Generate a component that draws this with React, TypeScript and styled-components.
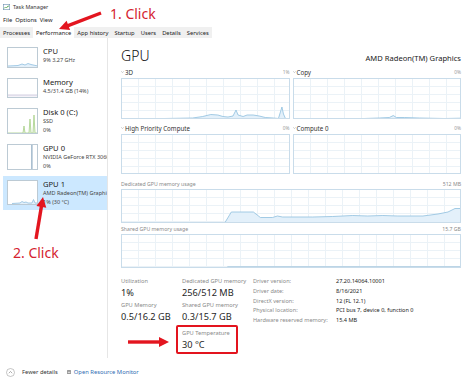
import React from 'react';
import styled, { createGlobalStyle } from 'styled-components';

const GlobalStyle = createGlobalStyle`
  html, body {
    margin: 0;
    padding: 0;
    background: #fff;
  }
  body {
    font-family: "Noto Sans", "DejaVu Sans", sans-serif;
    color: #1b1b1b;
  }
`;

const Window = styled.div`
  position: relative;
  width: 474px;
  height: 384px;
  overflow: hidden;
  display: flex;
  flex-direction: column;
  background: #fff;
`;

const TitleBar = styled.div`
  height: 14px;
  display: flex;
  align-items: center;
  gap: 3px;
  padding-left: 3px;
  font-size: 5.4px;
  color: #333;
`;

const MenuBar = styled.div`
  height: 11px;
  display: flex;
  align-items: center;
  gap: 3px;
  padding-left: 3px;
  font-size: 5.8px;
  color: #222;
`;

const TabStrip = styled.div`
  margin-top: 2px;
  height: 11px;
  display: flex;
  align-self: flex-start;
  background: #f0f0f0;
`;

const Tab = styled.div<{ $active?: boolean }>`
  display: flex;
  align-items: center;
  padding: 0 3px;
  font-size: 5.8px;
  color: #222;
  background: ${({ $active }) => ($active ? '#fff' : 'transparent')};
`;

const Body = styled.div`
  flex: 1;
  display: flex;
  min-height: 0;
`;

const Sidebar = styled.div`
  width: 108px;
  box-sizing: border-box;
  flex: none;
  padding: 5px 0 0 3px;
  margin-bottom: 4px;
  border-right: 1px solid #e6e6e6;
  display: flex;
  flex-direction: column;
  gap: 2px;
`;

const Item = styled.div<{ $selected?: boolean }>`
  display: flex;
  gap: 5px;
  padding: 4px;
  overflow: hidden;
  background: ${({ $selected }) => ($selected ? '#cce8ff' : 'transparent')};
`;

const Thumb = styled.div<{ $h: number }>`
  flex: none;
  width: 31px;
  height: ${({ $h }) => $h}px;
  box-sizing: border-box;
  border: 1px solid #bccad4;
  background: #fff;

  svg {
    display: block;
    width: 100%;
    height: 100%;
  }
`;

const ItemText = styled.div`
  display: flex;
  flex-direction: column;
  white-space: nowrap;
  min-width: 0;
`;

const ItemTitle = styled.div`
  font-size: 7.6px;
  line-height: 9px;
  color: #1a1a1a;
`;

const ItemSub = styled.div`
  font-size: 5.5px;
  line-height: 8.5px;
  color: #444;
`;

const Main = styled.div`
  flex: 1;
  min-width: 0;
  padding: 8px 13px 0 13px;
  display: flex;
  flex-direction: column;
`;

const Header = styled.div`
  height: 20px;
  display: flex;
  align-items: flex-end;
  justify-content: space-between;
`;

const Title = styled.div`
  font-size: 14px;
  line-height: 20px;
  font-weight: 300;
  color: #111;
`;

const Adapter = styled.div`
  font-size: 7.6px;
  line-height: 10px;
  padding-bottom: 3px;
  color: #222;
`;

const ChartGrid = styled.div`
  display: grid;
  grid-template-columns: 1fr 1fr;
  column-gap: 3px;
  row-gap: 3px;
`;

const ChartHead = styled.div<{ $h: number; $muted?: boolean }>`
  height: ${({ $h }) => $h}px;
  display: flex;
  align-items: center;
  justify-content: space-between;
  font-size: ${({ $muted }) => ($muted ? '5.2px' : '6.2px')};
  color: ${({ $muted }) => ($muted ? '#8a8a8a' : '#333')};
  white-space: nowrap;
`;

const HeadLabel = styled.span`
  display: flex;
  align-items: center;
  gap: 1px;
`;

const HeadValue = styled.span`
  font-size: 4.8px;
  color: #999;
`;

const ChartBox = styled.div<{ $h: number }>`
  height: ${({ $h }) => $h}px;
  box-sizing: border-box;
  border: 1px solid #c9dcea;
  background-color: #fff;
  background-image: linear-gradient(to right, #ebf2f7 1px, transparent 1px),
    linear-gradient(to bottom, #ebf2f7 1px, transparent 1px);
  background-size: 17px 8px;
  background-position: -1px -1px;

  svg {
    display: block;
    width: 100%;
    height: 100%;
  }
`;

const MemoryChart = styled.div`
  margin-top: 4px;
`;

const Stats = styled.div`
  margin-top: 9px;
  display: flex;
`;

const StatGrid = styled.div`
  display: grid;
  grid-template-columns: 61px 71px;
  row-gap: 1px;
  align-content: start;
`;

const Stat = styled.div<{ $col?: number }>`
  grid-column: ${({ $col }) => $col ?? 'auto'};
  display: flex;
  flex-direction: column;
  white-space: nowrap;
`;

const TempStat = styled(Stat)`
  justify-self: start;
  width: 50px;
  margin-left: -6px;
  padding: 2px 4px 0;
  border: 2px solid #e3141e;
  border-radius: 2px;
`;

const StatLabel = styled.div`
  font-size: 5.7px;
  line-height: 9px;
  color: #8a8a8a;
`;

const StatValue = styled.div`
  font-size: 9.2px;
  line-height: 14px;
  color: #1f1f1f;
`;

const DriverInfo = styled.div`
  display: grid;
  grid-template-columns: 83px auto;
  font-size: 5.55px;
  line-height: 9.8px;
  white-space: nowrap;
  align-content: start;
`;

const DriverKey = styled.div`
  color: #8a8a8a;
`;

const DriverVal = styled.div`
  color: #222;
`;

const Footer = styled.div`
  height: 20px;
  padding: 0 0 2px 6px;
  display: flex;
  align-items: center;
  gap: 9px;
  font-size: 5.8px;
  color: #333;
`;

const FooterLink = styled.span<{ $link?: boolean; $gap: number }>`
  display: flex;
  align-items: center;
  gap: ${({ $gap }) => $gap}px;
  color: ${({ $link }) => ($link ? '#2f6db3' : '#333')};
`;

const Annotations = styled.svg`
  position: absolute;
  left: 0;
  top: 0;
  width: 474px;
  height: 384px;
  pointer-events: none;
`;

const Callout = styled.div<{ $x: number; $y: number }>`
  position: absolute;
  left: ${({ $x }) => $x}px;
  top: ${({ $y }) => $y}px;
  font-size: 14px;
  line-height: 16px;
  color: #d5232f;
  white-space: nowrap;
`;

const Chevron = () => (
  <svg width="3" height="2" viewBox="0 0 3 2">
    <path d="M0.2 0.3 L1.5 1.6 L2.8 0.3" fill="none" stroke="#999" strokeWidth="0.5" />
  </svg>
);

type LineProps = { w: number; h: number; pts: [number, number][]; stroke?: string; fill?: string };

const Line = ({ w, h, pts, stroke = '#8fbfdf', fill = '#e3f0fa' }: LineProps) => {
  const d = pts.map(([x, y]) => `${x},${y}`).join(' ');
  const area = `${pts[0][0]},${h} ${d} ${pts[pts.length - 1][0]},${h}`;
  return (
    <svg viewBox={`0 0 ${w} ${h}`} preserveAspectRatio="none">
      <polygon points={area} fill={fill} />
      <polyline points={d} fill="none" stroke={stroke} strokeWidth="0.8" />
    </svg>
  );
};

const Arrow = ({ tail, tip }: { tail: [number, number]; tip: [number, number] }) => {
  const dx = tip[0] - tail[0];
  const dy = tip[1] - tail[1];
  const len = Math.hypot(dx, dy);
  const ux = dx / len;
  const uy = dy / len;
  const bx = tip[0] - ux * 10;
  const by = tip[1] - uy * 10;
  const nx = -uy * 5;
  const ny = ux * 5;
  return (
    <g fill="#e3151f" stroke="#e3151f">
      <line x1={tail[0]} y1={tail[1]} x2={bx + ux} y2={by + uy} strokeWidth="3.4" />
      <polygon points={`${tip[0]},${tip[1]} ${bx + nx},${by + ny} ${bx - nx},${by - ny}`} strokeWidth="0" />
    </g>
  );
};

const tabs = ['Processes', 'Performance', 'App history', 'Startup', 'Users', 'Details', 'Services'];

const chart3d: [number, number][] = [
  [42, 39.5], [70, 39], [80, 37.5], [88, 35.5], [95, 36], [100, 37.5], [105, 38], [110, 37],
  [113, 31], [115, 36], [120, 37.5], [124, 36], [130, 36], [136, 37], [142, 38.5], [150, 39],
  [155, 39.5], [157, 33], [158.5, 28], [160, 35], [162, 39.5], [165, 39.5],
];

const chartCopy: [number, number][] = [
  [70, 39.5], [85, 39], [95, 38.5], [99, 36.5], [102, 38.5], [110, 38.5], [125, 39], [150, 39.5], [166, 39.2],
];

const chartDedicated: [number, number][] = [
  [103, 32], [109, 22], [131, 22], [138, 27.5], [150, 27.5], [155, 26], [160, 27], [190, 27],
  [210, 26.5], [230, 25.5], [245, 26], [260, 25.5], [275, 26], [300, 26], [315, 24], [325, 22],
  [332, 18.5], [337, 18.5],
];

export default function App() {
  return (
    <Window>
      <GlobalStyle />
      <TitleBar>
        <svg width="7" height="6" viewBox="0 0 7 6">
          <rect x="0.3" y="0.3" width="6.4" height="5.4" fill="#fff" stroke="#6b8fb0" strokeWidth="0.6" />
          <polyline points="1,4.5 2.5,3 3.5,4 5,1.8 6,2.6" fill="none" stroke="#3c9a3c" strokeWidth="0.7" />
        </svg>
        <span>Task Manager</span>
      </TitleBar>
      <MenuBar>
        <span>File</span>
        <span>Options</span>
        <span>View</span>
      </MenuBar>
      <TabStrip>
        {tabs.map((t) => (
          <Tab key={t} $active={t === 'Performance'}>
            {t}
          </Tab>
        ))}
      </TabStrip>
      <Body>
        <Sidebar>
          <Item>
            <Thumb $h={21}>
              <Line w={29} h={19} pts={[[0, 18], [10, 17.5], [14, 16], [17, 17], [20, 15.5], [23, 16.5], [29, 17.8]]} />
            </Thumb>
            <ItemText>
              <ItemTitle>CPU</ItemTitle>
              <ItemSub>9% 3.27 GHz</ItemSub>
            </ItemText>
          </Item>
          <Item>
            <Thumb $h={20}>
              <Line w={29} h={18} pts={[[0, 16], [29, 16]]} stroke="#c7c2d8" fill="#f4f2f8" />
            </Thumb>
            <ItemText>
              <ItemTitle>Memory</ItemTitle>
              <ItemSub>4.5/31.4 GB (14%)</ItemSub>
            </ItemText>
          </Item>
          <Item>
            <Thumb $h={26}>
              <Line
                w={29}
                h={24}
                pts={[[0, 24], [15, 24], [16, 17], [17, 24], [21, 24], [22, 10], [23, 24], [25, 24], [26, 6], [27, 24], [29, 24]]}
                stroke="#a6cf86"
                fill="#eef7e6"
              />
            </Thumb>
            <ItemText>
              <ItemTitle>Disk 0 (C:)</ItemTitle>
              <ItemSub>SSD</ItemSub>
              <ItemSub>0%</ItemSub>
            </ItemText>
          </Item>
          <Item>
            <Thumb $h={26}>
              <Line w={29} h={24} pts={[[23.5, 24], [23.5, 0], [24.2, 0], [24.2, 24]]} stroke="#9fb6c9" fill="#dbe6ef" />
            </Thumb>
            <ItemText>
              <ItemTitle>GPU 0</ItemTitle>
              <ItemSub>NVIDIA GeForce RTX 3060</ItemSub>
              <ItemSub>0%</ItemSub>
            </ItemText>
          </Item>
          <Item $selected>
            <Thumb $h={25}>
              <Line
                w={29}
                h={23}
                pts={[[4, 22.5], [12, 22], [14, 20.5], [16, 21.5], [18, 21], [20, 22], [24, 22], [25.5, 18.5], [27, 22], [29, 22]]}
              />
            </Thumb>
            <ItemText>
              <ItemTitle>GPU 1</ItemTitle>
              <ItemSub>AMD Radeon(TM) Graphics</ItemSub>
              <ItemSub>1% (30 °C)</ItemSub>
            </ItemText>
          </Item>
        </Sidebar>
        <Main>
          <Header>
            <Title>GPU</Title>
            <Adapter>AMD Radeon(TM) Graphics</Adapter>
          </Header>
          <ChartGrid>
            <div>
              <ChartHead $h={12}>
                <HeadLabel>
                  <Chevron />
                  3D
                </HeadLabel>
                <HeadValue>1%</HeadValue>
              </ChartHead>
              <ChartBox $h={41}>
                <Line w={165} h={39} pts={chart3d} />
              </ChartBox>
            </div>
            <div>
              <ChartHead $h={12}>
                <HeadLabel>
                  <Chevron />
                  Copy
                </HeadLabel>
                <HeadValue>0%</HeadValue>
              </ChartHead>
              <ChartBox $h={41}>
                <Line w={166} h={39} pts={chartCopy} />
              </ChartBox>
            </div>
            <div>
              <ChartHead $h={12}>
                <HeadLabel>
                  <Chevron />
                  High Priority Compute
                </HeadLabel>
                <HeadValue>0%</HeadValue>
              </ChartHead>
              <ChartBox $h={40} />
            </div>
            <div>
              <ChartHead $h={12}>
                <HeadLabel>
                  <Chevron />
                  Compute 0
                </HeadLabel>
                <HeadValue>0%</HeadValue>
              </ChartHead>
              <ChartBox $h={40} />
            </div>
          </ChartGrid>
          <MemoryChart>
            <ChartHead $h={11} $muted>
              <span>Dedicated GPU memory usage</span>
              <span>512 MB</span>
            </ChartHead>
            <ChartBox $h={34}>
              <Line w={337} h={32} pts={chartDedicated} />
            </ChartBox>
            <ChartHead $h={11} $muted>
              <span>Shared GPU memory usage</span>
              <span>15.7 GB</span>
            </ChartHead>
            <ChartBox $h={34}>
              <Line w={337} h={32} pts={[[105, 31.6], [337, 31.6]]} stroke="#a9c9df" fill="transparent" />
            </ChartBox>
          </MemoryChart>
          <Stats>
            <StatGrid>
              <Stat>
                <StatLabel>Utilization</StatLabel>
                <StatValue>1%</StatValue>
              </Stat>
              <Stat>
                <StatLabel>Dedicated GPU memory</StatLabel>
                <StatValue>256/512 MB</StatValue>
              </Stat>
              <Stat>
                <StatLabel>GPU Memory</StatLabel>
                <StatValue>0.5/16.2 GB</StatValue>
              </Stat>
              <Stat>
                <StatLabel>Shared GPU memory</StatLabel>
                <StatValue>0.3/15.7 GB</StatValue>
              </Stat>
              <TempStat $col={2}>
                <StatLabel>GPU Temperature</StatLabel>
                <StatValue>30 °C</StatValue>
              </TempStat>
            </StatGrid>
            <DriverInfo>
              <DriverKey>Driver version:</DriverKey>
              <DriverVal>27.20.14064.10001</DriverVal>
              <DriverKey>Driver date:</DriverKey>
              <DriverVal>8/16/2021</DriverVal>
              <DriverKey>DirectX version:</DriverKey>
              <DriverVal>12 (FL 12.1)</DriverVal>
              <DriverKey>Physical location:</DriverKey>
              <DriverVal>PCI bus 7, device 0, function 0</DriverVal>
              <DriverKey>Hardware reserved memory:</DriverKey>
              <DriverVal>15.4 MB</DriverVal>
            </DriverInfo>
          </Stats>
        </Main>
      </Body>
      <Footer>
        <FooterLink $gap={7}>
          <svg width="9" height="9" viewBox="0 0 9 9">
            <circle cx="4.5" cy="4.5" r="4" fill="none" stroke="#a0a0a0" strokeWidth="0.6" />
            <path d="M2.8 5.2 L4.5 3.5 L6.2 5.2" fill="none" stroke="#777" strokeWidth="0.6" />
          </svg>
          Fewer details
        </FooterLink>
        <FooterLink $link $gap={3}>
          <svg width="4" height="4" viewBox="0 0 4 4">
            <rect x="0" y="0" width="4" height="4" rx="0.5" fill="#9a9a9a" />
            <rect x="0.8" y="1.8" width="2.4" height="1.2" fill="#d8d8d8" />
          </svg>
          Open Resource Monitor
        </FooterLink>
      </Footer>
      <Annotations viewBox="0 0 474 384">
        <Arrow tail={[101, 13]} tip={[59, 29]} />
        <Arrow tail={[36, 239]} tip={[43, 197]} />
        <Arrow tail={[128, 342]} tip={[169, 342]} />
      </Annotations>
      <Callout $x={110} $y={6}>1. Click</Callout>
      <Callout $x={13} $y={245}>2. Click</Callout>
    </Window>
  );
}
